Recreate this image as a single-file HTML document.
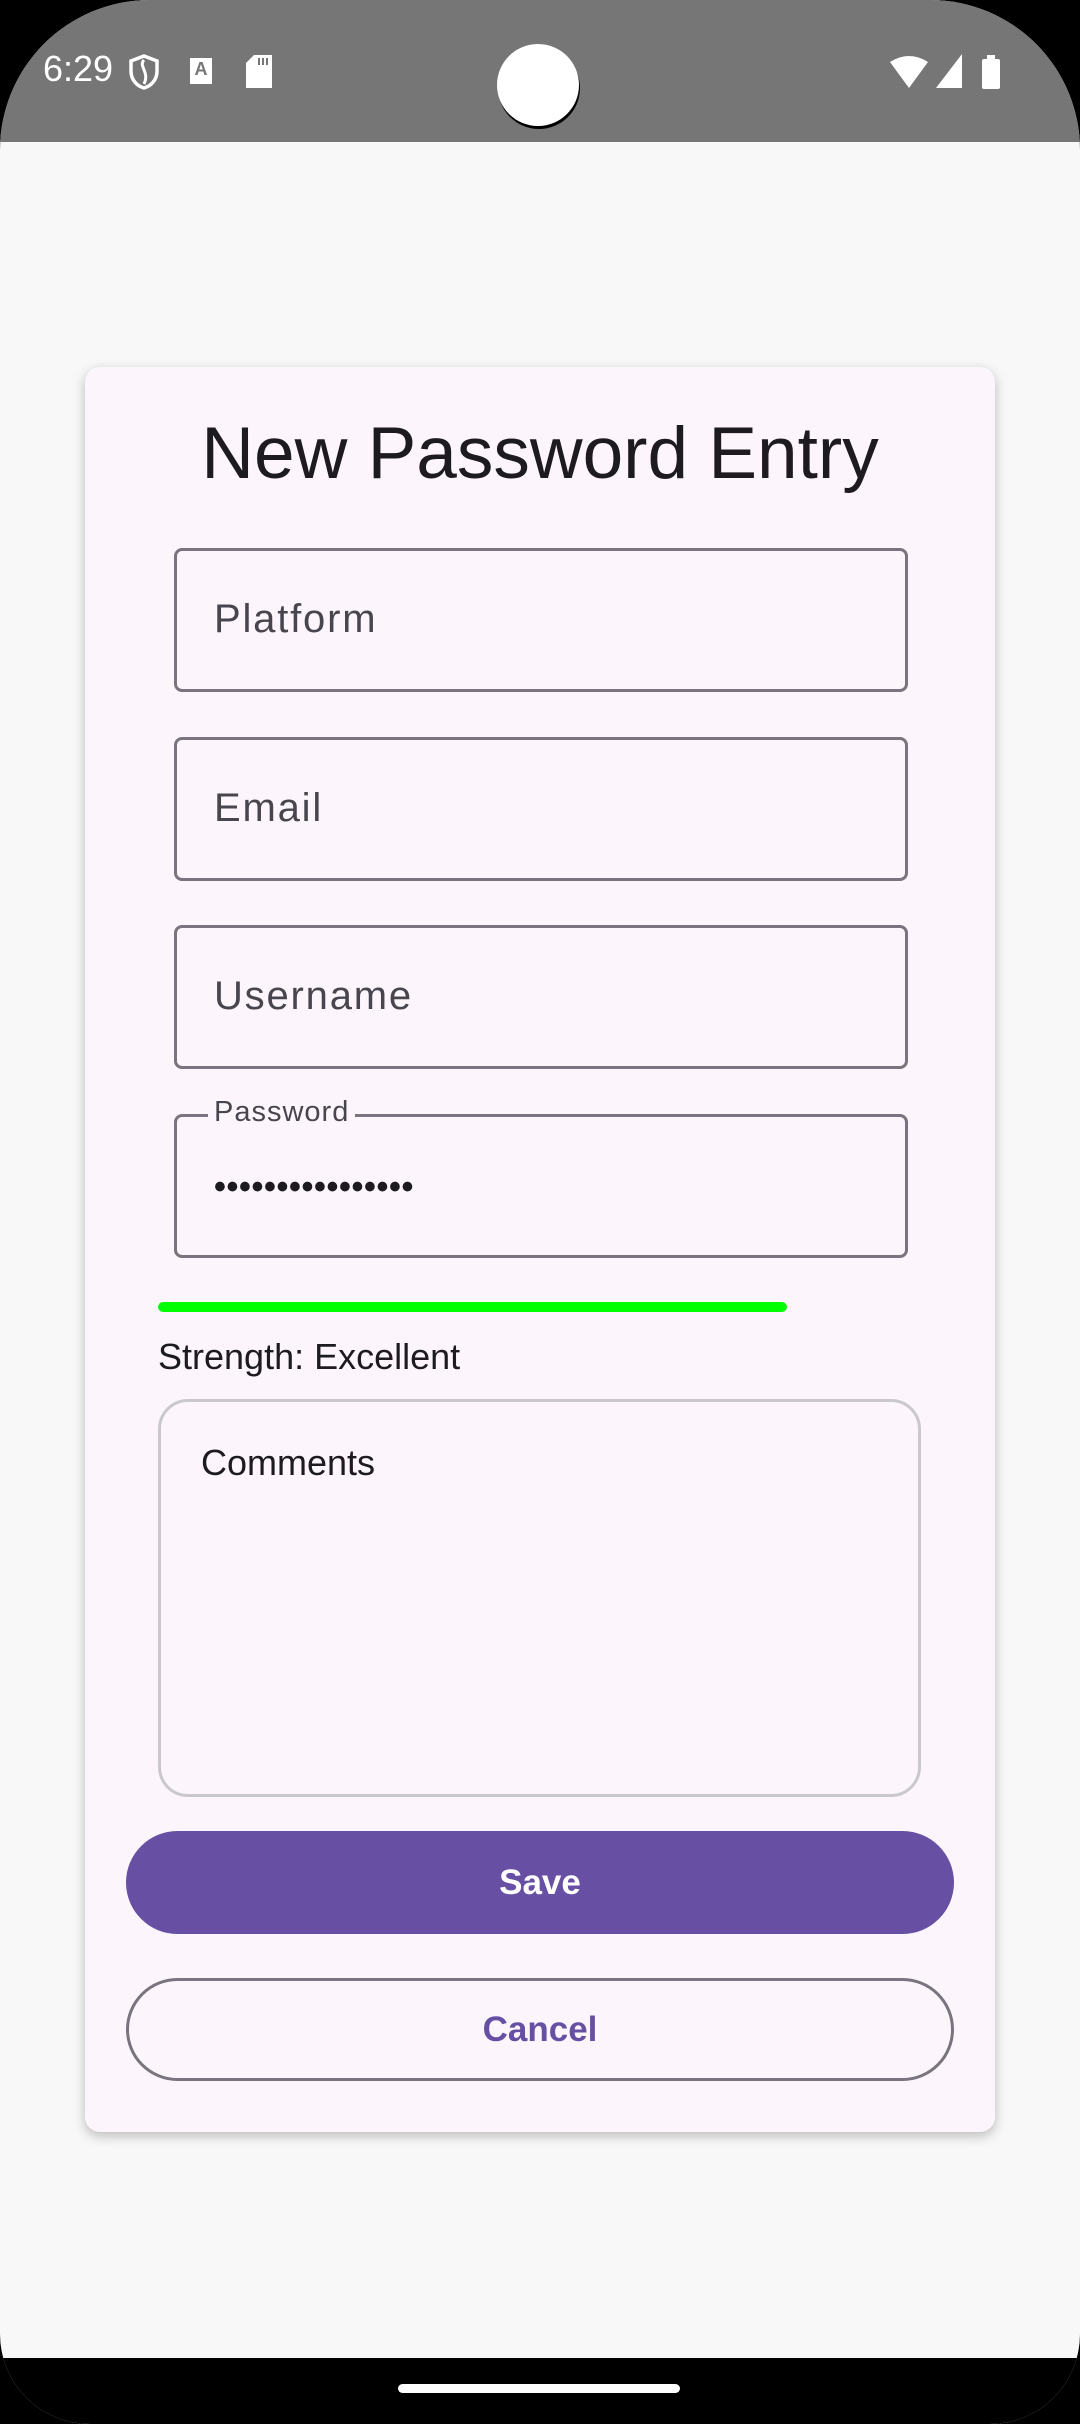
<!DOCTYPE html>
<html><head><meta charset="utf-8"><style>
html,body{margin:0;padding:0}
body{width:1080px;height:2424px;position:relative;background:#000;overflow:hidden;font-family:"Liberation Sans",sans-serif}
.screen{position:absolute;left:0;top:0;width:1080px;height:2424px;background:#f8f8f8;border-radius:150px 150px 90px 90px;overflow:hidden}
.status{position:absolute;left:0;top:0;width:1080px;height:142px;background:#767676}
.cam{position:absolute;left:497px;top:44px;width:82px;height:82px;border-radius:50%;background:#fff;box-shadow:1px 3px 0 #000}
.time{position:absolute;left:43px;top:48px;color:#fff;font-size:36px}
.nav{position:absolute;left:0;top:2358px;width:1080px;height:66px;background:#000}
.handle{position:absolute;left:398px;top:2384px;width:282px;height:9px;border-radius:5px;background:#fff}
.card{position:absolute;left:85px;top:367px;width:910px;height:1765px;background:#fcf6fc;border-radius:15px;box-shadow:0 4px 12px rgba(0,0,0,.25)}
.title{position:absolute;left:0;width:1080px;top:412px;text-align:center;font-size:73px;color:#1d1b20}
.field{position:absolute;left:174px;width:734px;height:144px;border:3px solid #79747e;border-radius:8px;box-sizing:border-box}
.field span{position:absolute;left:37px;top:46px;font-size:40px;color:#49454f;letter-spacing:1.8px}
.lbl{position:absolute;left:208px;top:1096px;font-size:29px;color:#49454f;background:#fcf6fc;padding:0 6px;letter-spacing:1px}
.dots{position:absolute;left:214px;top:1168px;font-size:34px;letter-spacing:0.6px;color:#1d1b20;font-weight:bold}
.bar{position:absolute;left:158px;top:1302px;width:629px;height:10px;border-radius:5px;background:#00ff00}
.str{position:absolute;left:158px;top:1336px;font-size:36px;color:#1d1b20}
.com{position:absolute;left:158px;top:1399px;width:763px;height:398px;border:3px solid #cbc8cb;border-radius:30px;box-sizing:border-box}
.com span{position:absolute;left:40px;top:40px;font-size:36px;color:#1d1b20}
.btn{position:absolute;left:126px;width:828px;height:103px;border-radius:52px;box-sizing:border-box;text-align:center;line-height:103px;font-size:35px;font-weight:bold}
.save{top:1831px;background:#6750a4;color:#fff}
.cancel{top:1978px;border:3px solid #79747e;color:#6750a4;line-height:97px}
</style></head><body>
<div class="screen">
<div class="status">
<div class="time">6:29</div>
<svg style="position:absolute;left:128px;top:54px" width="32" height="36" viewBox="0 0 32 36"><path d="M16 2 L29 7 V17 C29 26 23 32 16 34 C9 32 3 26 3 17 V7 Z" fill="none" stroke="#fff" stroke-width="3.5"/><path d="M16 6 C10 12 22 18 16 30" fill="none" stroke="#fff" stroke-width="3"/></svg>
<div style="position:absolute;left:190px;top:58px;width:22px;height:26px;background:#fff;font-size:18px;color:#767676;text-align:center;font-weight:bold;line-height:22px">A</div>
<svg style="position:absolute;left:246px;top:55px" width="26" height="33" viewBox="0 0 26 33"><path d="M8 0 H26 V33 H0 V8 Z" fill="#fff"/><rect x="12" y="3" width="2" height="7" fill="#767676"/><rect x="16" y="3" width="2" height="7" fill="#767676"/><rect x="20" y="3" width="2" height="7" fill="#767676"/></svg>
<svg style="position:absolute;left:890px;top:54px" width="110" height="36" viewBox="0 0 110 36"><path d="M0 8 Q19 -4 38 8 L19 34 Z" fill="#fff"/><path d="M72 0 V34 H46 Z" fill="#fff"/><rect x="92" y="5" width="18" height="30" rx="2" fill="#fff"/><rect x="97" y="1" width="8" height="5" fill="#fff"/></svg>
<div class="cam"></div>
</div>
<div class="card"></div>
<div class="title">New Password Entry</div>
<div class="field" style="top:548px"><span>Platform</span></div>
<div class="field" style="top:737px"><span>Email</span></div>
<div class="field" style="top:925px"><span>Username</span></div>
<div class="field" style="top:1114px"></div>
<div class="lbl">Password</div>
<div class="dots">••••••••••••••••</div>
<div class="bar"></div>
<div class="str">Strength: Excellent</div>
<div class="com"><span>Comments</span></div>
<div class="btn save">Save</div>
<div class="btn cancel">Cancel</div>
<div class="nav"></div>
<div class="handle"></div>
</div>
</body></html>
